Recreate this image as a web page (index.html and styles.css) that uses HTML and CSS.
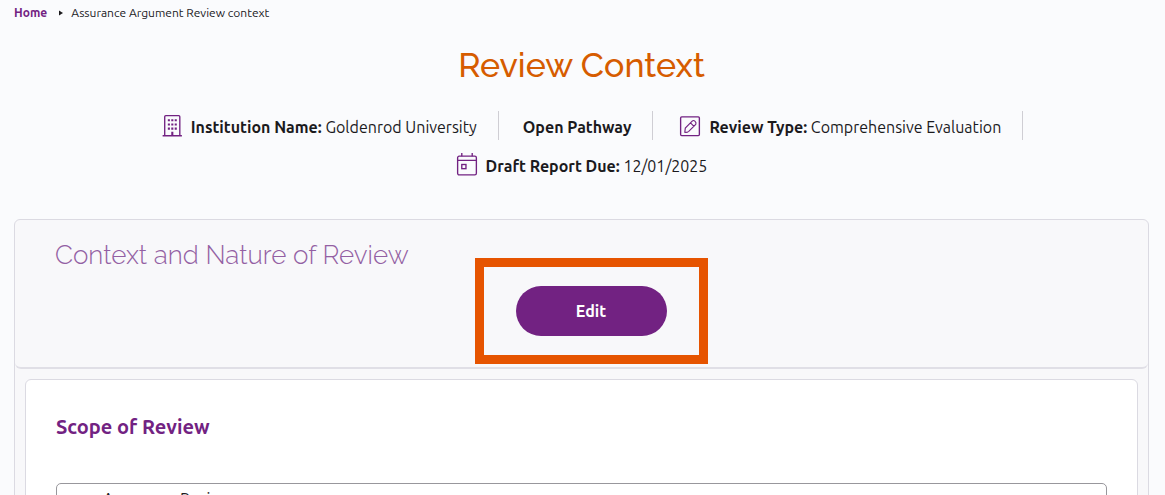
FILE: index.html
```html
<!DOCTYPE html>
<html lang="en">
<head>
<meta charset="utf-8">
<title>Review Context</title>
<link rel="stylesheet" href="styles.css">
</head>
<body>
<nav class="breadcrumb" aria-label="Breadcrumb">
  <a href="#">Home</a>
  <svg class="crumb-arrow" viewBox="0 0 4 6" aria-hidden="true"><path d="M0 0.5 4 3 0 5.5z"/></svg>
  <span>Assurance Argument Review context</span>
</nav>
<main class="page">
  <h1 class="title">Review Context</h1>
  <ul class="facts">
    <li class="fact">
      <svg class="icon" viewBox="0 0 20 24" aria-hidden="true"><path d="M3 21.500V3.500Q3 2.500 4 2.500H16.500Q17.500 2.500 17.500 3.500V21.500M1 21.800H19.500"/><path class="solid" d="M6 6h2v2H6zM9.300 6h2v2h-2zM12.600 6h2v2h-2zM6 10h2v2H6zM9.300 10h2v2h-2zM12.600 10h2v2h-2zM6 14h2v2H6zM9.300 14h2v2h-2zM12.600 14h2v2h-2zM9.300 18h2v4h-2z"/></svg>
      <span><b>Institution Name:</b> Goldenrod University</span>
    </li>
    <li class="fact fact-plain"><b>Open Pathway</b></li>
    <li class="fact fact-type">
      <svg class="icon" viewBox="0 0 20 24" aria-hidden="true"><rect x="1" y="3.750" width="18" height="18" rx="1"/><path class="thin" d="M5 18.500 5.500 14.500 12.300 7.600Q13.500 6.700 14.900 8T15.500 11L8.800 17.600Q7 19 5 18.500ZM10.500 9.500 13.800 12.800"/></svg>
      <span><b>Review Type:</b> Comprehensive Evaluation</span>
    </li>
    <li class="fact fact-last">
      <svg class="icon" viewBox="0 0 20 24" aria-hidden="true"><rect x="1" y="4" width="18" height="18" rx="1.500"/><path d="M1 8H19M5 1V4M15 1V4"/><rect x="5" y="12" width="4" height="4"/></svg>
      <span><b>Draft Report Due:</b> 12/01/2025</span>
    </li>
  </ul>
  <section class="panel">
    <header class="panel-head">
      <h2 class="panel-title">Context and Nature of Review</h2>
      <div class="highlight"><button class="edit" type="button">Edit</button></div>
    </header>
    <div class="card">
      <h3 class="card-title"><label for="scope">Scope of Review</label></h3>
      <textarea class="scope" id="scope" readonly>Assurance Review</textarea>
    </div>
  </section>
</main>
</body>
</html>
```
FILE: styles.css
```css
* { box-sizing: border-box; }
body {
  margin: 0;
  height: 100vh;
  overflow: hidden;
  background: #fafbfd;
  color: #1b1a1d;
  font-family: Ubuntu, "Noto Sans", sans-serif;
  font-size: 16px;
}
.breadcrumb {
  display: flex;
  align-items: center;
  height: 24px;
  padding: 0 14px;
  font-size: 12px;
}
.breadcrumb a { color: #722282; font-weight: 700; text-decoration: none; }
.crumb-arrow { width: 4px; height: 6px; margin: 2px 8px 0 12px; fill: #1b1a1d; }
.page { padding: 0 16px 0 14px; }
.title {
  margin: 18px 0 23px;
  color: #d65c00;
  font: 500 34px/46px Raleway, Lato, sans-serif;
  text-align: center;
}
.facts {
  display: flex;
  flex-wrap: wrap;
  justify-content: center;
  row-gap: 10px;
  margin: 0 auto;
  max-width: 1000px;
  padding: 0;
  list-style: none;
}
.fact {
  display: flex;
  align-items: center;
  gap: 8px;
  height: 29px;
  padding: 3px 21px 0;
  border-right: 1px solid #cfced4;
  line-height: 24px;
}
.fact-plain { padding-left: 24px; }
.fact-type { padding-left: 26px; }
.fact-last { border-right: 0; }
.icon {
  width: 22px;
  height: 25px;
  margin-bottom: 4px;
  fill: none;
  stroke: #722282;
  stroke-width: 1.3;
}
.icon .solid { fill: #722282; stroke: none; }
.icon .thin { stroke-width: 1.1; }
.panel {
  margin-top: 40px;
  border: 1px solid #dbdae2;
  border-radius: 6px;
  background: #f8f8fa;
}
.panel-head {
  height: 149px;
  padding: 16px 40px 0;
  border-bottom: 2px solid #e0dfe6;
  border-radius: 6px;
}
.panel-title {
  margin: 0;
  color: #9360a3;
  font: 300 26px/38px Raleway, Lato, sans-serif;
}
.highlight {
  width: 233px;
  margin: -16px 0 0 calc(50% - 107px);
  padding: 19px 32px;
  border: 9px solid #e65400;
}
.edit {
  display: block;
  width: 100%;
  height: 50px;
  border: 0;
  border-radius: 25px;
  background: #722282;
  color: #fff;
  font: 700 16px/24px Ubuntu, "Noto Sans", sans-serif;
}
.card {
  margin: 10px;
  padding: 32px 30px;
  border: 1px solid #dbdae2;
  border-radius: 6px;
  background: #fff;
}
.card-title { margin: 0 0 41px; color: #722282; font-size: 20px; line-height: 30px; }
.scope {
  display: block;
  width: 100%;
  height: 120px;
  padding: 4px 46px;
  border: 1px solid #98979c;
  border-radius: 5px;
  background: #fff;
  color: #1b1a1d;
  font: 16px/22px Ubuntu, "Noto Sans", sans-serif;
  resize: none;
}
```
